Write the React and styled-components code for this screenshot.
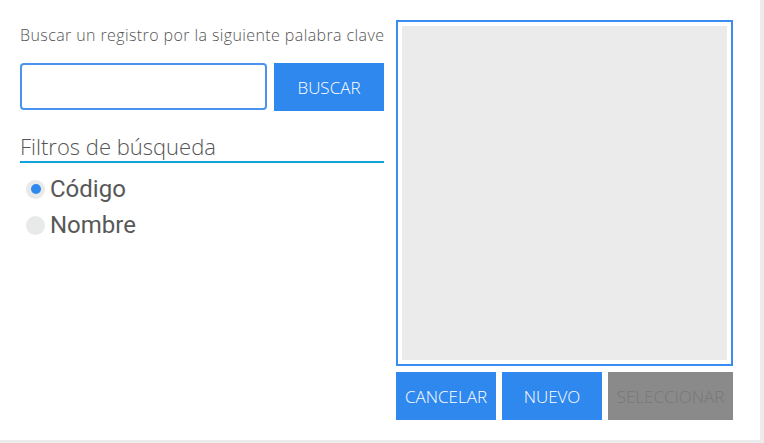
import React, { useState } from "react";
import styled, { createGlobalStyle } from "styled-components";

const GlobalStyle = createGlobalStyle`
  html, body {
    margin: 0;
    padding: 0;
    background: #ececec;
  }
  * {
    box-sizing: border-box;
  }
`;

const Card = styled.div`
  width: 760px;
  height: 440px;
  background: #ffffff;
  display: flex;
  padding: 20px 0 0 20px;
  gap: 12px;
  font-family: "Open Sans", "Noto Sans", sans-serif;
`;

const SearchColumn = styled.div`
  width: 364px;
  display: flex;
  flex-direction: column;
`;

const Hint = styled.p`
  margin: 3px 0 0;
  font-size: 16px;
  font-weight: 300;
  letter-spacing: 0.4px;
  color: #555;
  line-height: 24px;
  white-space: nowrap;
`;

const SearchRow = styled.div`
  display: flex;
  gap: 7px;
  margin-top: 16px;
`;

const Input = styled.input`
  flex: 1;
  height: 47px;
  border: 2px solid #4a94ef;
  border-radius: 4px;
  outline: none;
  font: inherit;
  padding: 0 8px;
`;

const Button = styled.button`
  border: none;
  height: ${(p) => p.$h || 48}px;
  width: ${(p) => p.$w}px;
  background: ${(p) => (p.$disabled ? "#8a8a8a" : "#2f88ee")};
  color: ${(p) => (p.$disabled ? "#787878" : "#ffffff")};
  font-family: "Open Sans", "Noto Sans", sans-serif;
  font-weight: 300;
  font-size: 17px;
  padding: 0;
  text-transform: uppercase;
  cursor: pointer;
`;

const SectionTitle = styled.h3`
  margin: 21px 0 0;
  font-size: 22px;
  font-weight: 300;
  color: #555;
  line-height: 28px;
  border-bottom: 2px solid #11a3de;
  padding-bottom: 1px;
`;

const RadioList = styled.div`
  display: flex;
  flex-direction: column;
  gap: 8px;
  margin-top: 12px;
  padding-left: 6px;
`;

const RadioRow = styled.label`
  display: flex;
  align-items: center;
  gap: 5px;
  font-family: Roboto, "Noto Sans", sans-serif;
  font-size: 24px;
  color: #585858;
  line-height: 28px;
  cursor: pointer;
`;

const Dot = styled.span`
  width: 19px;
  height: 19px;
  border-radius: 50%;
  background: #e8e9e9;
  display: flex;
  align-items: center;
  justify-content: center;
  &::after {
    content: "";
    width: 10px;
    height: 10px;
    border-radius: 50%;
    background: ${(p) => (p.$on ? "#2f88ee" : "transparent")};
  }
`;

const ResultColumn = styled.div`
  width: 337px;
  display: flex;
  flex-direction: column;
  gap: 6px;
`;

const ResultBox = styled.div`
  height: 346px;
  border: 2px solid #3a8cf0;
  padding: 4px;
  background: #fff;
`;

const ResultInner = styled.div`
  width: 100%;
  height: 100%;
  background: #eaebea;
`;

const ActionRow = styled.div`
  display: flex;
  gap: 6px;
`;

const filters = ["Código", "Nombre"];

const App = () => {
  const [selected, setSelected] = useState("Código");
  return (
    <>
      <GlobalStyle />
      <Card>
        <SearchColumn>
          <Hint>Buscar un registro por la siguiente palabra clave</Hint>
          <SearchRow>
            <Input />
            <Button $w={110}>Buscar</Button>
          </SearchRow>
          <SectionTitle>Filtros de búsqueda</SectionTitle>
          <RadioList>
            {filters.map((f) => (
              <RadioRow key={f} onClick={() => setSelected(f)}>
                <Dot $on={selected === f} />
                {f}
              </RadioRow>
            ))}
          </RadioList>
        </SearchColumn>
        <ResultColumn>
          <ResultBox>
            <ResultInner />
          </ResultBox>
          <ActionRow>
            <Button $w={100}>Cancelar</Button>
            <Button $w={100}>Nuevo</Button>
            <Button $w={125} $disabled>
              Seleccionar
            </Button>
          </ActionRow>
        </ResultColumn>
      </Card>
    </>
  );
};

export default App;
